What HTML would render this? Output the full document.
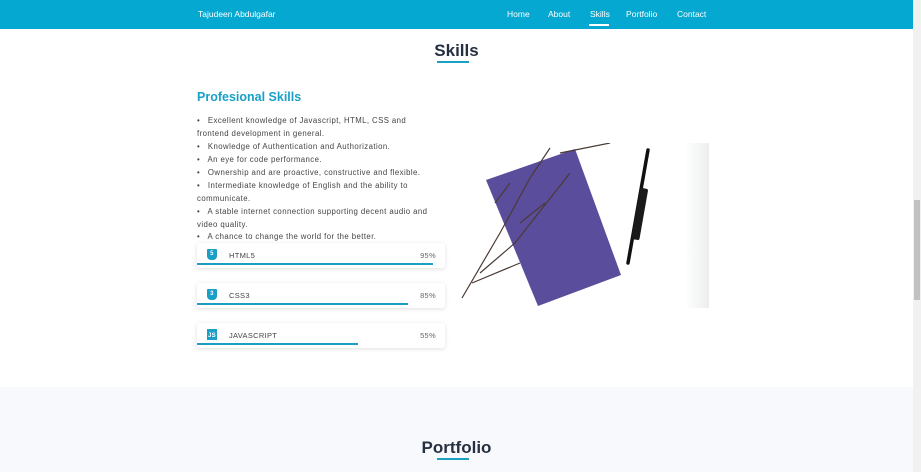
<html><head><style>
body{margin:0;width:921px;height:472px;overflow:hidden;position:relative;font-family:"Liberation Sans",sans-serif;background:#fff}
.nav{position:absolute;left:0;top:0;width:913px;height:29px;background:#05a8d1;color:#fff;font-size:8.5px}
.nav span{position:absolute;top:9px}
.sb{position:absolute;right:0;top:0;width:8px;height:472px;background:#f1f1f1}
.sb div{position:absolute;left:1px;top:200px;width:6px;height:100px;background:#c1c1c1}
h2{position:absolute;margin:0;font-size:17px;font-weight:bold;color:#253041;width:913px;text-align:center}
.ul{position:absolute;height:2px;background:#1aa0c0}
.t{position:absolute;left:197px;font-size:7.8px;color:#444;white-space:nowrap;letter-spacing:0.42px}
.card{position:absolute;left:197px;width:248px;height:25px;background:#fff;box-shadow:0 1px 5px rgba(0,0,0,.13);border-radius:3px;font-size:7.5px;color:#444;letter-spacing:0.3px}
.card .ic{position:absolute;left:10px;top:6px;width:10px;height:11px;background:#1a9fc7;color:#fff;font-size:6px;font-weight:bold;text-align:center;line-height:11px;border-radius:1px 1px 4px 4px}
.card .n{position:absolute;left:32px;top:8px}
.card .p{position:absolute;right:9px;top:8px;color:#666}
.card .b{position:absolute;left:0;bottom:3px;height:2px;background:#1b9ec6}
</style></head><body>
<div class="nav"><span style="left:198px">Tajudeen Abdulgafar</span><span style="left:507px">Home</span><span style="left:548px">About</span><span style="left:590px">Skills</span><span style="left:626px">Portfolio</span><span style="left:677px">Contact</span><div style="position:absolute;left:589px;top:24px;width:20px;height:2px;background:#fff"></div></div>
<h2 style="top:41px">Skills</h2><div class="ul" style="left:437px;top:61px;width:32px"></div>
<div style="position:absolute;left:197px;top:90px;font-size:12.5px;font-weight:bold;color:#1aa0c8">Profesional Skills</div>
<div class="t" style="top:116px">•&nbsp;&nbsp; Excellent knowledge of Javascript, HTML, CSS and</div>
<div class="t" style="top:129px">frontend development in general.</div>
<div class="t" style="top:142px">•&nbsp;&nbsp; Knowledge of Authentication and Authorization.</div>
<div class="t" style="top:155px">•&nbsp;&nbsp; An eye for code performance.</div>
<div class="t" style="top:168px">•&nbsp;&nbsp; Ownership and are proactive, constructive and flexible.</div>
<div class="t" style="top:181px">•&nbsp;&nbsp; Intermediate knowledge of English and the ability to</div>
<div class="t" style="top:194px">communicate.</div>
<div class="t" style="top:207px">•&nbsp;&nbsp; A stable internet connection supporting decent audio and</div>
<div class="t" style="top:220px">video quality.</div>
<div class="t" style="top:232px">•&nbsp;&nbsp; A chance to change the world for the better.</div>
<div class="card" style="top:243px"><div class="ic">5</div><span class="n">HTML5</span><span class="p">95%</span><div class="b" style="width:236px"></div></div>
<div class="card" style="top:283px"><div class="ic">3</div><span class="n">CSS3</span><span class="p">85%</span><div class="b" style="width:211px"></div></div>
<div class="card" style="top:323px"><div class="ic" style="border-radius:0;line-height:14px">JS</div><span class="n">JAVASCRIPT</span><span class="p">55%</span><div class="b" style="width:161px"></div></div>
<svg style="position:absolute;left:460px;top:143px" width="249" height="165">
<defs><linearGradient id="g" x1="0" x2="1"><stop offset="0" stop-color="#fff"/><stop offset="1" stop-color="#eceeed"/></linearGradient></defs>
<rect width="249" height="165" fill="#fff"/><rect x="225" width="24" height="165" fill="url(#g)"/>
<polygon points="26,37 115,6 161,132 78,163" fill="#5a4d9c"/>
<path d="M2,155 L40,90 L70,35 L90,5 M20,130 L55,100 L110,30 M60,80 L85,60 M12,140 L60,120 M100,10 L150,0 M35,60 L50,40" stroke="#4a3a33" stroke-width="1.2" fill="none"/>
<line x1="188" y1="7" x2="168" y2="120" stroke="#111" stroke-width="3.5" stroke-linecap="round"/>
<rect x="176" y="45" width="8" height="52" rx="2" fill="#1a1a1a" transform="rotate(10 180 70)"/>
</svg>
<div style="position:absolute;left:0;top:387px;width:913px;height:85px;background:#f8f9fd"></div>
<h2 style="top:438px;font-size:17px">Portfolio</h2><div class="ul" style="left:437px;top:458px;width:32px"></div>
<div class="sb"><div></div></div>
</body></html>
